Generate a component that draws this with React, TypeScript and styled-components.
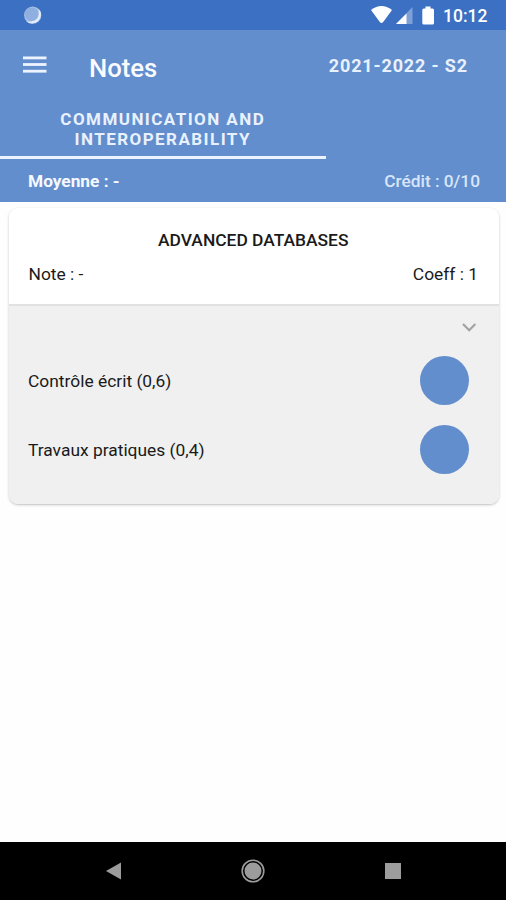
import React from 'react';
import styled, { createGlobalStyle } from 'styled-components';

const colors = {
  status: '#3b70c3',
  primary: '#628ecd',
  panel: '#f0f0f0',
  ink: '#1a1a1a',
};

const GlobalStyle = createGlobalStyle`
  * { box-sizing: border-box; }
  body { margin: 0; background: #fefefe; }
`;

const Screen = styled.div`
  width: 506px;
  height: 900px;
  display: flex;
  flex-direction: column;
  background: #fefefe;
  font-family: Roboto, sans-serif;
  font-size: 17.4px;
  line-height: 20px;
  color: ${colors.ink};
  white-space: nowrap;
  overflow: hidden;
`;

const StatusBar = styled.div`
  height: 30px;
  flex: none;
  display: flex;
  align-items: center;
  justify-content: space-between;
  padding: 2px 18.5px 0 23px;
  background: ${colors.status};
  color: #fff;
`;

const StatusIcons = styled.div`
  display: flex;
  align-items: center;
`;

const Clock = styled.span`
  margin-left: 6px;
  font-size: 17.5px;
  font-weight: 500;
`;

const Header = styled.header`
  height: 171.5px;
  flex: none;
  display: flex;
  flex-direction: column;
  background: ${colors.primary};
`;

const Toolbar = styled.div`
  height: 74px;
  display: flex;
  align-items: center;
  padding: 0 38px 0 23px;
`;

const MenuIcon = styled.svg`
  display: block;
  margin-bottom: 5px;
`;

const Title = styled.h1`
  flex: 1;
  margin: 2px 0 0 42px;
  font-size: 25.7px;
  line-height: 30px;
  font-weight: 500;
  color: #f9fbff;
`;

const Period = styled.span`
  margin-bottom: 3px;
  font-size: 18px;
  font-weight: 700;
  letter-spacing: 0.86px;
  color: #e9f1ff;
`;

const Tab = styled.div`
  width: 325.5px;
  height: 54.5px;
  padding-top: 5px;
  border-bottom: 3px solid #eaf3ff;
  font-size: 17px;
  font-weight: 700;
  letter-spacing: 1.45px;
  text-align: center;
  color: #e9f1ff;
`;

const Summary = styled.div`
  height: 43px;
  display: flex;
  align-items: center;
  justify-content: space-between;
  padding: 1px 26px 0 28px;
  font-size: 17.3px;
`;

const Average = styled.span`
  font-weight: 700;
  color: #f5f9ff;
`;

const Credit = styled.span`
  font-weight: 500;
  color: #d9e6fa;
`;

const Content = styled.main`
  flex: 1;
  padding: 6.5px 7px 0 8.5px;
`;

const Card = styled.section`
  height: 295.5px;
  border-radius: 9px;
  overflow: hidden;
  background: #fff;
  box-shadow: 0 1px 3px rgba(0, 0, 0, 0.2), 0 1px 1px rgba(0, 0, 0, 0.06);
`;

const CardHead = styled.div`
  height: 98px;
  padding: 22px 21px 0 20px;
  border-bottom: 2px solid #e1e1e1;
`;

const CourseName = styled.h2`
  margin: 0;
  font-size: 17.4px;
  line-height: 20px;
  font-weight: 500;
  text-align: center;
`;

const CourseStats = styled.div`
  display: flex;
  justify-content: space-between;
  margin-top: 14px;
`;

const Details = styled.div`
  height: 198px;
  padding: 13px 30px 0 19.5px;
  background: ${colors.panel};
`;

const Chevron = styled.svg`
  display: block;
  margin: 0 -8px 21px auto;
`;

const Assessment = styled.div`
  height: 49px;
  margin-bottom: 20px;
  display: flex;
  align-items: center;
  justify-content: space-between;
`;

const Label = styled.span`
  margin-top: 1px;
`;

const Grade = styled.span`
  width: 49px;
  height: 49px;
  border-radius: 50%;
  background: ${colors.primary};
`;

const NavBar = styled.nav`
  height: 58.5px;
  flex: none;
  display: flex;
  align-items: center;
  justify-content: space-around;
  padding: 1px 43px 0;
  background: #000;
`;

const assessments = ['Contrôle écrit (0,6)', 'Travaux pratiques (0,4)'];

export default function App() {
  return (
    <>
      <GlobalStyle />
      <Screen>
        <StatusBar>
          <svg width="20" height="20" viewBox="0 0 20 20">
            <circle cx="9.7" cy="9.2" r="8.6" fill="#a6bfe6" />
            <path d="M15.5 2.8A8.6 8.6 0 1 1 3 14.9C9 18 17 12 15.5 2.8Z" fill="#e3edfa" />
            <circle cx="8.8" cy="8.3" r="6.8" fill="#8fafe0" />
          </svg>
          <StatusIcons>
            <svg width="66" height="20" viewBox="0 0 66 20">
              <path d="M0 4Q10.5-4 21 4L12.2 16Q10.5 18 8.8 16Z" fill="#fff" />
              <path d="M41.5 1V18H25Z" fill="#7f9fd7" />
              <path d="M35.5 7.5V18H25Z" fill="#fff" />
              <path d="M54.5 0.5H59.5V2.5H61.5Q63 2.5 63 4V17Q63 18.5 61.5 18.5H52.8Q51.3 18.5 51.3 17V4Q51.3 2.5 52.8 2.5H54.5Z" fill="#fff" />
            </svg>
            <Clock>10:12</Clock>
          </StatusIcons>
        </StatusBar>
        <Header>
          <Toolbar>
            <MenuIcon width="24" height="18" viewBox="0 0 24 18" fill="#eef4ff">
              <rect y="0.5" width="23.5" height="2.8" />
              <rect y="7.1" width="23.5" height="2.8" />
              <rect y="13.8" width="23.5" height="2.8" />
            </MenuIcon>
            <Title>Notes</Title>
            <Period>2021-2022 - S2</Period>
          </Toolbar>
          <Tab>
            COMMUNICATION AND
            <br />
            INTEROPERABILITY
          </Tab>
          <Summary>
            <Average>Moyenne : -</Average>
            <Credit>Crédit : 0/10</Credit>
          </Summary>
        </Header>
        <Content>
          <Card>
            <CardHead>
              <CourseName>ADVANCED DATABASES</CourseName>
              <CourseStats>
                <span>Note : -</span>
                <span>Coeff : 1</span>
              </CourseStats>
            </CardHead>
            <Details>
              <Chevron width="16" height="16" viewBox="0 0 16 16" fill="none" stroke="#a2a2a2" strokeWidth="2.2">
                <path d="M2 5L8.2 11.2L14.4 5" />
              </Chevron>
              {assessments.map((name) => (
                <Assessment key={name}>
                  <Label>{name}</Label>
                  <Grade />
                </Assessment>
              ))}
            </Details>
          </Card>
        </Content>
        <NavBar>
          <svg width="24" height="24" viewBox="0 0 24 24">
            <path d="M5 12L20 3.5V20.5Z" fill="#9c9c9c" />
          </svg>
          <svg width="24" height="24" viewBox="0 0 24 24">
            <circle cx="12" cy="12" r="10.8" fill="none" stroke="#9c9c9c" strokeWidth="1.6" />
            <circle cx="12" cy="12" r="8.5" fill="#9c9c9c" />
          </svg>
          <svg width="24" height="24" viewBox="0 0 24 24">
            <rect x="4" y="4" width="16" height="16" fill="#9c9c9c" />
          </svg>
        </NavBar>
      </Screen>
    </>
  );
}
